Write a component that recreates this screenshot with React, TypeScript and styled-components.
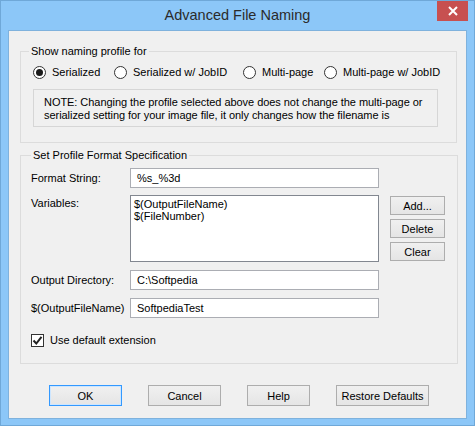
import React from "react";
import styled, { createGlobalStyle } from "styled-components";

const GlobalStyle = createGlobalStyle`
  html, body {
    margin: 0;
    padding: 0;
    background: #8cc7f8;
  }
  * {
    box-sizing: border-box;
  }
`;

const FONT = `"Liberation Sans", Arial, sans-serif`;

function App() {
  return (
    <>
      <GlobalStyle />
      <Window>
        <TitleBar>
          <Title>Advanced File Naming</Title>
          <CloseButton aria-label="Close">
            <svg width="10" height="10" viewBox="0 0 10 10">
              <path d="M1 1 L9 9 M9 1 L1 9" stroke="#fff" strokeWidth="2" />
            </svg>
          </CloseButton>
        </TitleBar>
        <Client>
          <Group $legendShift={-4} $padLeft={12} $padBottom={15}>
            <Legend>Show naming profile for</Legend>
            <RadioRow>
              <RadioItem $width={81}>
                <Radio $checked />
                Serialized
              </RadioItem>
              <RadioItem $width={129}>
                <Radio />
                Serialized w/ JobID
              </RadioItem>
              <RadioItem $width={81}>
                <Radio />
                Multi-page
              </RadioItem>
              <RadioItem>
                <Radio />
                Multi-page w/ JobID
              </RadioItem>
            </RadioRow>
            <NoteBox>
              NOTE: Changing the profile selected above does not change the multi-page or
              <br />
              serialized setting for your image file, it only changes how the filename is
            </NoteBox>
          </Group>

          <Group $legendShift={0} $padLeft={10} $padBottom={15} $spec>
            <Legend>Set Profile Format Specification</Legend>
            <FieldRow>
              <FieldLabel>Format String:</FieldLabel>
              <TextBox>%s_%3d</TextBox>
            </FieldRow>
            <FieldRow $top>
              <FieldLabel>Variables:</FieldLabel>
              <ListBox>
                <div>$(OutputFileName)</div>
                <div>$(FileNumber)</div>
              </ListBox>
              <SideButtons>
                <SmallButton>Add...</SmallButton>
                <SmallButton>Delete</SmallButton>
                <SmallButton>Clear</SmallButton>
              </SideButtons>
            </FieldRow>
            <FieldRow>
              <FieldLabel>Output Directory:</FieldLabel>
              <TextBox>C:\Softpedia</TextBox>
            </FieldRow>
            <FieldRow>
              <FieldLabel>$(OutputFileName)</FieldLabel>
              <TextBox>SoftpediaTest</TextBox>
            </FieldRow>
            <CheckRow>
              <CheckBox>
                <svg width="11" height="11" viewBox="0 0 11 11">
                  <path
                    d="M1.5 5.5 L4.3 8.5 L9.5 1.8"
                    fill="none"
                    stroke="#222"
                    strokeWidth="2"
                  />
                </svg>
              </CheckBox>
              Use default extension
            </CheckRow>
          </Group>

          <ButtonBar>
            <DialogButton $width={73} $default>
              OK
            </DialogButton>
            <DialogButton $width={73}>Cancel</DialogButton>
            <DialogButton $width={63}>Help</DialogButton>
            <DialogButton $width={93}>Restore Defaults</DialogButton>
          </ButtonBar>
        </Client>
      </Window>
    </>
  );
}

export default App;

const Window = styled.div`
  position: relative;
  width: 475px;
  height: 426px;
  background: #8cc7f8;
  border: 1px solid #6fa8d8;
  display: flex;
  flex-direction: column;
  font-family: ${FONT};
  font-size: 11px;
  color: #000;
  overflow: hidden;
`;

const TitleBar = styled.div`
  position: relative;
  height: 29px;
  display: flex;
  align-items: center;
  justify-content: center;
`;

const Title = styled.div`
  font-size: 14.5px;
  color: #2b2b2b;
  margin-top: -1px;
`;

const CloseButton = styled.div`
  position: absolute;
  top: -1px;
  right: 6px;
  width: 31px;
  height: 21px;
  background: #c75050;
  display: flex;
  align-items: center;
  justify-content: center;
`;

const Client = styled.div`
  margin: 0 7px 0 7px;
  height: 389px;
  background: #f0f0f0;
  border: 1px solid #7fb2dd;
  padding: 12px 0 0 11px;
  display: flex;
  flex-direction: column;
`;

const Group = styled.fieldset<{
  $legendShift: number;
  $padLeft: number;
  $padBottom: number;
  $spec?: boolean;
}>`
  width: 437px;
  margin: ${(p) => (p.$spec ? "4px 0 0 0" : "0")};
  padding: 0 12px ${(p) => p.$padBottom}px ${(p) => p.$padLeft}px;
  border: 1px solid #dcdcdc;
  display: flex;
  flex-direction: column;

  & > legend {
    margin-left: ${(p) => p.$legendShift}px;
  }
`;

const Legend = styled.legend`
  padding: 0 2px;
  line-height: 16px;
  font-size: 11px;
  color: #000;
`;

const RadioRow = styled.div`
  display: flex;
  align-items: center;
  height: 16px;
  margin-top: 5px;
`;

const RadioItem = styled.label<{ $width?: number }>`
  display: flex;
  align-items: center;
  gap: 6px;
  width: ${(p) => (p.$width ? `${p.$width}px` : "auto")};
  white-space: nowrap;
`;

const Radio = styled.span<{ $checked?: boolean }>`
  position: relative;
  width: 13px;
  height: 13px;
  flex: none;
  border-radius: 50%;
  border: 1px solid #333;
  background: #fff;

  &::after {
    content: "";
    display: ${(p) => (p.$checked ? "block" : "none")};
    position: absolute;
    left: 2px;
    top: 2px;
    width: 7px;
    height: 7px;
    border-radius: 50%;
    background: #1a1a1a;
  }
`;

const NoteBox = styled.div`
  width: 405px;
  margin-top: 9px;
  border: 1px solid #d6d6d6;
  padding: 6px 0 4px 10px;
  line-height: 13px;
  letter-spacing: -0.05px;
`;

const FieldRow = styled.div<{ $top?: boolean }>`
  display: flex;
  align-items: ${(p) => (p.$top ? "flex-start" : "center")};
  margin-top: ${(p) => (p.$top ? "7px" : "8px")};

  &:first-of-type {
    margin-top: 5px;
  }
`;

const FieldLabel = styled.div`
  width: 99px;
  flex: none;
  line-height: 16px;
  white-space: nowrap;
`;

const TextBox = styled.div`
  width: 249px;
  height: 20px;
  background: #fff;
  border: 1px solid #abadb3;
  padding: 0 6px;
  display: flex;
  align-items: center;
  white-space: nowrap;
`;

const ListBox = styled.div`
  width: 249px;
  height: 67px;
  background: #fff;
  border: 1px solid #828790;
  padding: 2px 3px;
  line-height: 12px;
`;

const SideButtons = styled.div`
  display: flex;
  flex-direction: column;
  gap: 4px;
  margin: 1px 0 0 11px;
`;

const SmallButton = styled.div`
  width: 55px;
  height: 19px;
  border: 1px solid #adadad;
  background: linear-gradient(#f0f0f0, #e5e5e5);
  display: flex;
  align-items: center;
  justify-content: center;
`;

const CheckRow = styled.label`
  display: flex;
  align-items: center;
  gap: 6px;
  margin-top: 14px;
  height: 16px;
`;

const CheckBox = styled.span`
  width: 13px;
  height: 13px;
  flex: none;
  border: 1px solid #333;
  background: #fff;
  display: flex;
  align-items: center;
  justify-content: center;
`;

const ButtonBar = styled.div`
  display: flex;
  gap: 26px;
  margin: 21px 0 0 29px;
`;

const DialogButton = styled.div<{ $width: number; $default?: boolean }>`
  width: ${(p) => p.$width}px;
  height: 21px;
  border: 1px solid ${(p) => (p.$default ? "#3399ff" : "#adadad")};
  box-shadow: ${(p) => (p.$default ? "inset 0 0 0 1px #cde6ff" : "none")};
  background: linear-gradient(#f0f0f0, #e5e5e5);
  display: flex;
  align-items: center;
  justify-content: center;
`;
